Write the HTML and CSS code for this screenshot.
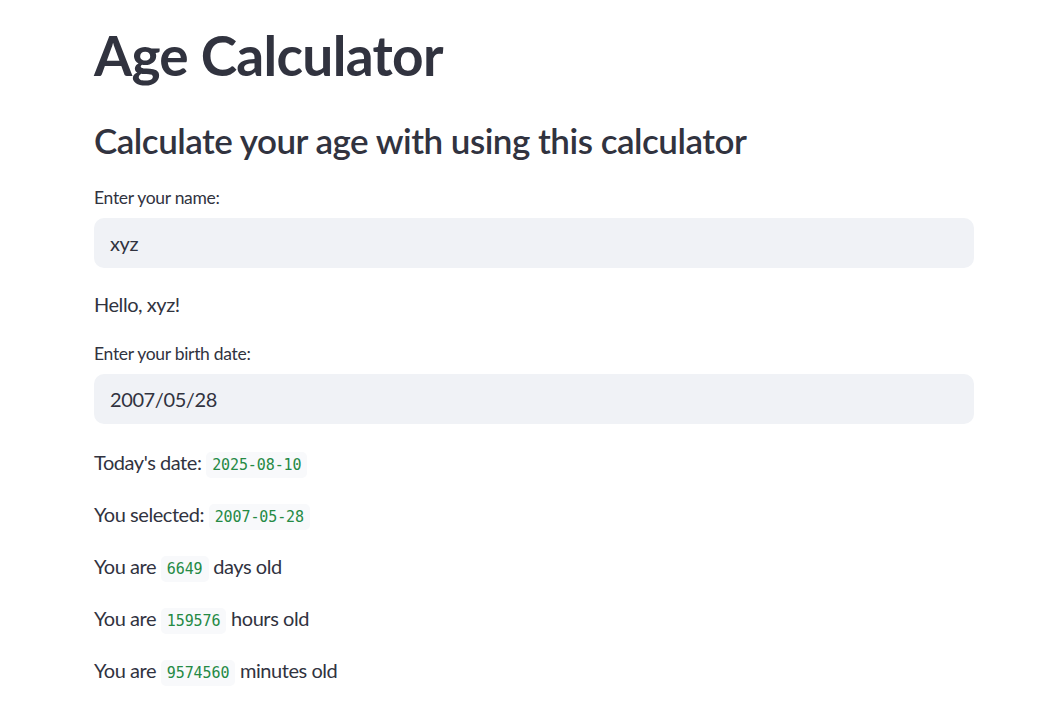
FILE: index.html
```html
<!DOCTYPE html>
<html lang="en">
<head>
<meta charset="utf-8">
<title>Age Calculator</title>
<link rel="stylesheet" href="styles.css">
</head>
<body>
<main class="app">
  <h1 class="title">Age Calculator</h1>
  <h2 class="subtitle">Calculate your age with using this calculator</h2>
  <div class="field">
    <label class="label">Enter your name:</label>
    <div class="input">xyz</div>
  </div>
  <p class="text">Hello, xyz!</p>
  <div class="field">
    <label class="label">Enter your birth date:</label>
    <div class="input">2007/05/28</div>
  </div>
  <div class="results">
    <p class="text">Today's date: <code class="code">2025-08-10</code></p>
    <p class="text">You selected: <code class="code">2007-05-28</code></p>
    <p class="text">You are <code class="code">6649</code> days old</p>
    <p class="text">You are <code class="code">159576</code> hours old</p>
    <p class="text">You are <code class="code">9574560</code> minutes old</p>
  </div>
</main>
</body>
</html>
```

FILE: styles.css
```css
html, body {
  margin: 0;
  padding: 0;
  background: #ffffff;
}

body {
  font-family: "Lato", "Noto Sans", sans-serif;
  color: #31333f;
}

.app {
  width: 880px;
  margin-left: 94px;
  padding-top: 22px;
  display: flex;
  flex-direction: column;
  gap: 20px;
}

.title {
  margin: 0 0 11px 0;
  font-size: 55px;
  line-height: 66px;
  font-weight: 700;
  letter-spacing: -0.7px;
}

.subtitle {
  margin: 0 0 3px 0;
  font-size: 35px;
  line-height: 42px;
  font-weight: 600;
  letter-spacing: -0.5px;
}

.field {
  display: flex;
  flex-direction: column;
}

.label {
  font-size: 17.5px;
  line-height: 28px;
  margin-bottom: 6px;
  letter-spacing: -0.3px;
}

.input {
  height: 50px;
  box-sizing: border-box;
  background: #f0f2f6;
  border-radius: 10px;
  padding: 0 16px;
  display: flex;
  align-items: center;
  font-size: 20px;
  letter-spacing: -0.4px;
}

.text {
  margin: 0;
  font-size: 20px;
  line-height: 32px;
  letter-spacing: -0.45px;
}

.results {
  margin-top: 2px;
  display: flex;
  flex-direction: column;
  gap: 20px;
}

.code {
  font-family: "DejaVu Sans Mono", "Liberation Mono", monospace;
  font-size: 15px;
  line-height: 1;
  letter-spacing: -0.1px;
  color: #258a45;
  background: #f8f9fb;
  border-radius: 5px;
  padding: 4px 6px;
}
```
